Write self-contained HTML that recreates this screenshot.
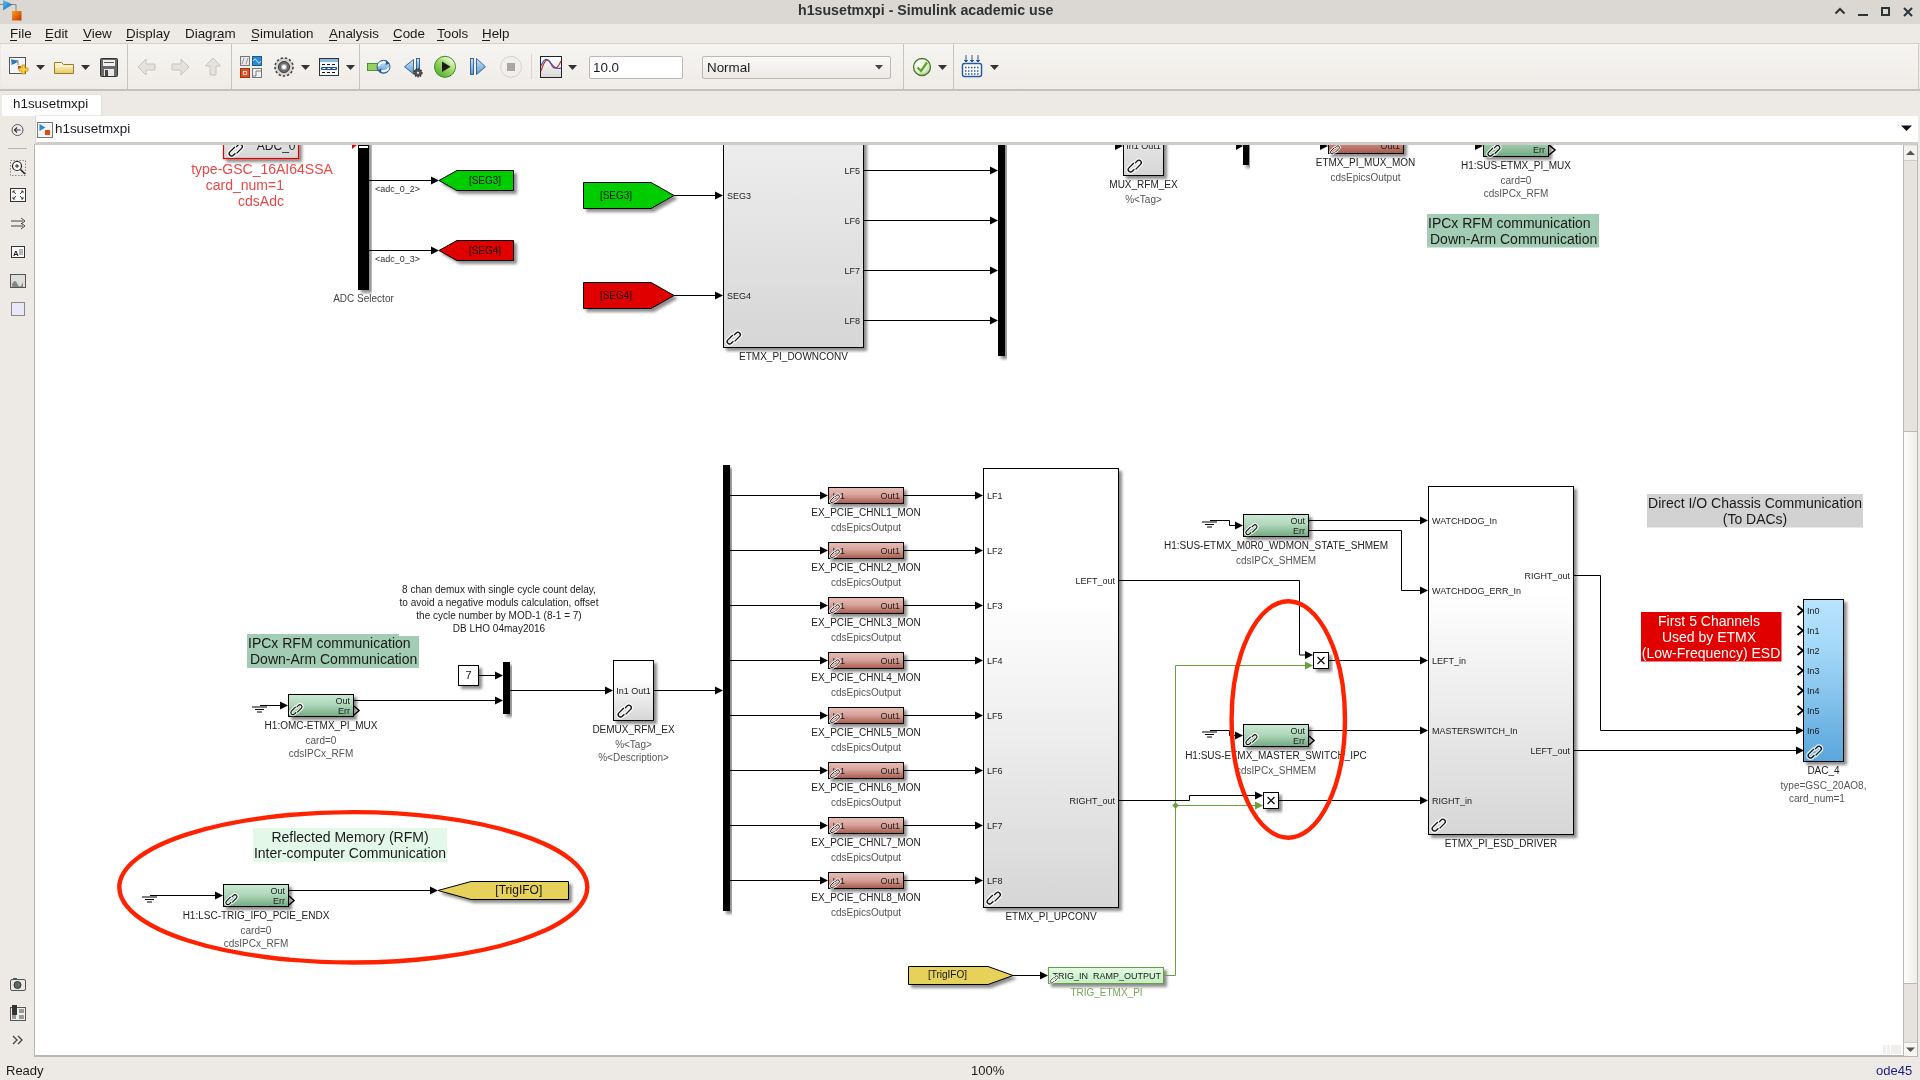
<!DOCTYPE html>
<html><head><meta charset="utf-8"><title>h1susetmxpi - Simulink</title>
<style>html,body{margin:0;padding:0;width:1920px;height:1080px;overflow:hidden;background:#edeae6;font-family:"Liberation Sans",sans-serif;}
svg,div{will-change:transform;}
</style></head><body>
<svg style="position:absolute;left:35px;top:145px" width="1868" height="910" viewBox="35 145 1868 910" font-family="Liberation Sans, sans-serif"><defs>
<filter id="sh" x="-20%" y="-20%" width="150%" height="160%">
<feGaussianBlur in="SourceAlpha" stdDeviation="1.7"/>
<feOffset dx="2.5" dy="2.5" result="ob"/>
<feComponentTransfer><feFuncA type="linear" slope="0.45"/></feComponentTransfer>
<feMerge><feMergeNode/><feMergeNode in="SourceGraphic"/></feMerge>
</filter>
<linearGradient id="gGray" x1="0" y1="0" x2="0" y2="1"><stop offset="0" stop-color="#ffffff"/><stop offset="0.3" stop-color="#ffffff"/><stop offset="1" stop-color="#d6d6d6"/></linearGradient>
<linearGradient id="gGray2" x1="0" y1="0" x2="0" y2="1"><stop offset="0" stop-color="#f2f2f2"/><stop offset="1" stop-color="#d6d6d6"/></linearGradient>
<linearGradient id="gIPC" x1="0" y1="0" x2="0" y2="1"><stop offset="0" stop-color="#cbe8d4"/><stop offset="0.45" stop-color="#b0d8bc"/><stop offset="1" stop-color="#72aa82"/></linearGradient>
<linearGradient id="gEP" x1="0" y1="0" x2="0" y2="1"><stop offset="0" stop-color="#e6beb6"/><stop offset="0.45" stop-color="#d8a49c"/><stop offset="1" stop-color="#a85a4c"/></linearGradient>
<linearGradient id="gDAC" x1="0" y1="0" x2="0" y2="1"><stop offset="0" stop-color="#b8e4ff"/><stop offset="0.3" stop-color="#a4d8f8"/><stop offset="1" stop-color="#5aa6dc"/></linearGradient>
<linearGradient id="gTRIG" x1="0" y1="0" x2="0" y2="1"><stop offset="0" stop-color="#e4fce4"/><stop offset="1" stop-color="#c4ecc4"/></linearGradient>
<g id="lnk">
<g fill="none" stroke="#fff" stroke-width="4" opacity="0.8" stroke-linecap="round"><path d="M7.85 -10.05 L2.90 -5.10 A2.4 2.4 0 0 0 6.30 -1.70 L8.42 -3.82"/><path d="M9.08 -9.88 L11.20 -12.00 A2.4 2.4 0 0 1 14.60 -8.60 L9.65 -3.65"/></g>
<g fill="none" stroke="#111" stroke-width="1.3" stroke-linecap="butt"><path d="M7.85 -10.05 L2.90 -5.10 A2.4 2.4 0 0 0 6.30 -1.70 L8.42 -3.82"/><path d="M9.08 -9.88 L11.20 -12.00 A2.4 2.4 0 0 1 14.60 -8.60 L9.65 -3.65"/></g>
</g>
</defs>
<rect x="35" y="145" width="1868" height="910" fill="#fff"/>
<rect x="223.5" y="120.5" width="75.0" height="38.0" fill="url(#gGray2)" stroke="#e00000" stroke-width="1.2" filter="url(#sh)"/>
<text x="295.5" y="150.3" font-size="12" fill="#222" text-anchor="end" >ADC_0</text>
<use href="#lnk" transform="translate(227.0,157.0) scale(1.0)"/>
<path d="M352 144 L358 144 L352 149 Z" fill="#e00000"/>
<text x="262.0" y="174.0" font-size="14" fill="#e84848" text-anchor="middle" >type-GSC_16AI64SSA</text>
<text x="284.0" y="190.0" font-size="14" fill="#e84848" text-anchor="end" >card_num=1</text>
<text x="284.0" y="206.0" font-size="14" fill="#e84848" text-anchor="end" >cdsAdc</text>
<rect x="358.5" y="120.5" width="10.0" height="169.0" fill="#000" stroke="#000" stroke-width="1" filter="url(#sh)"/>
<rect x="359" y="146" width="9" height="2" fill="#fff"/>
<text x="363.5" y="301.6" font-size="10" fill="#444" text-anchor="middle" >ADC Selector</text>
<path d="M369.0 180.5 L431.0 180.5" stroke="#000" stroke-width="1" fill="none"/>
<path d="M439.0 180.5 L431.0 176.5 L431.0 184.5 Z" fill="#000"/>
<path d="M369.0 250.5 L431.0 250.5" stroke="#000" stroke-width="1" fill="none"/>
<path d="M439.0 250.5 L431.0 246.5 L431.0 254.5 Z" fill="#000"/>
<text x="375.0" y="192.2" font-size="9" fill="#333" text-anchor="start" >&lt;adc_0_2&gt;</text>
<text x="375.0" y="262.2" font-size="9" fill="#333" text-anchor="start" >&lt;adc_0_3&gt;</text>
<path d="M439.0 180.5 L456.9 170.5 L513.5 170.5 L513.5 190.5 L456.9 190.5 Z" fill="#00cc00" stroke="#000" stroke-width="1" filter="url(#sh)"/>
<text x="485.0" y="183.6" font-size="10" fill="#111" text-anchor="middle" >[SEG3]</text>
<path d="M439.0 250.5 L456.9 240.5 L513.5 240.5 L513.5 260.5 L456.9 260.5 Z" fill="#e00000" stroke="#000" stroke-width="1" filter="url(#sh)"/>
<text x="485.0" y="253.6" font-size="10" fill="#111" text-anchor="middle" >[SEG4]</text>
<path d="M583.5 182.5 L651.0 182.5 L674.0 195.5 L651.0 208.5 L583.5 208.5 Z" fill="#00cc00" stroke="#000" stroke-width="1" filter="url(#sh)"/>
<text x="616.0" y="198.6" font-size="10" fill="#111" text-anchor="middle" >[SEG3]</text>
<path d="M583.5 282.5 L651.0 282.5 L674.0 295.5 L651.0 308.5 L583.5 308.5 Z" fill="#e00000" stroke="#000" stroke-width="1" filter="url(#sh)"/>
<text x="616.0" y="298.6" font-size="10" fill="#111" text-anchor="middle" >[SEG4]</text>
<path d="M674.0 195.5 L715.0 195.5" stroke="#000" stroke-width="1" fill="none"/>
<path d="M723.0 195.5 L715.0 191.5 L715.0 199.5 Z" fill="#000"/>
<path d="M674.0 295.5 L715.0 295.5" stroke="#000" stroke-width="1" fill="none"/>
<path d="M723.0 295.5 L715.0 291.5 L715.0 299.5 Z" fill="#000"/>
<rect x="723.5" y="100.5" width="140.0" height="247.0" fill="url(#gGray2)" stroke="#000" stroke-width="1" filter="url(#sh)"/>
<text x="727.0" y="198.7" font-size="9" fill="#222" text-anchor="start" >SEG3</text>
<text x="727.0" y="298.7" font-size="9" fill="#222" text-anchor="start" >SEG4</text>
<text x="860.0" y="173.7" font-size="9" fill="#222" text-anchor="end" >LF5</text>
<path d="M864.0 170.5 L990.0 170.5" stroke="#000" stroke-width="1" fill="none"/>
<path d="M998.0 170.5 L990.0 166.5 L990.0 174.5 Z" fill="#000"/>
<text x="860.0" y="223.7" font-size="9" fill="#222" text-anchor="end" >LF6</text>
<path d="M864.0 220.5 L990.0 220.5" stroke="#000" stroke-width="1" fill="none"/>
<path d="M998.0 220.5 L990.0 216.5 L990.0 224.5 Z" fill="#000"/>
<text x="860.0" y="273.7" font-size="9" fill="#222" text-anchor="end" >LF7</text>
<path d="M864.0 270.5 L990.0 270.5" stroke="#000" stroke-width="1" fill="none"/>
<path d="M998.0 270.5 L990.0 266.5 L990.0 274.5 Z" fill="#000"/>
<text x="860.0" y="323.7" font-size="9" fill="#222" text-anchor="end" >LF8</text>
<path d="M864.0 320.5 L990.0 320.5" stroke="#000" stroke-width="1" fill="none"/>
<path d="M998.0 320.5 L990.0 316.5 L990.0 324.5 Z" fill="#000"/>
<use href="#lnk" transform="translate(725.0,345.0) scale(1.0)"/>
<text x="793.5" y="359.6" font-size="10" fill="#222" text-anchor="middle" >ETMX_PI_DOWNCONV</text>
<rect x="998.5" y="120.5" width="6.0" height="235.0" fill="#000" stroke="#000" stroke-width="1" filter="url(#sh)"/>
<rect x="1123.5" y="110.5" width="40.0" height="65.0" fill="url(#gGray2)" stroke="#000" stroke-width="1" filter="url(#sh)"/>
<text x="1143.5" y="149.2" font-size="9" fill="#222" text-anchor="middle" >In1 Out1</text>
<path d="M1115 142 L1123 146 L1115 150 Z" fill="#000"/>
<use href="#lnk" transform="translate(1126.0,173.0) scale(1.0)"/>
<text x="1143.5" y="188.1" font-size="10" fill="#222" text-anchor="middle" >MUX_RFM_EX</text>
<text x="1143.5" y="203.1" font-size="10" fill="#555" text-anchor="middle" >%&lt;Tag&gt;</text>
<rect x="1243.5" y="120.5" width="5.0" height="44.0" fill="#000" stroke="#000" stroke-width="1" filter="url(#sh)"/>
<path d="M1236 142 L1243 146 L1236 150 Z" fill="#000"/>
<rect x="1328.5" y="125.5" width="75.0" height="28.0" fill="url(#gEP)" stroke="#000" stroke-width="1" filter="url(#sh)"/>
<text x="1400.0" y="149.2" font-size="9" fill="#222" text-anchor="end" >Out1</text>
<path d="M1320 142 L1328 146 L1320 150 Z" fill="#000"/>
<use href="#lnk" transform="translate(1329.0,154.5) scale(0.68)"/>
<text x="1365.5" y="165.6" font-size="10" fill="#222" text-anchor="middle" >ETMX_PI_MUX_MON</text>
<text x="1365.5" y="181.1" font-size="10" fill="#555" text-anchor="middle" >cdsEpicsOutput</text>
<rect x="1483.5" y="125.5" width="65.0" height="31.0" fill="url(#gIPC)" stroke="#000" stroke-width="1" filter="url(#sh)"/>
<text x="1545.0" y="153.2" font-size="9" fill="#222" text-anchor="end" >Err</text>
<path d="M1549 145 L1555 150 L1549 155" fill="none" stroke="#000" stroke-width="1.5"/>
<path d="M1475 142 L1483 146 L1475 150 Z" fill="#000"/>
<use href="#lnk" transform="translate(1486.0,157.0) scale(0.9)"/>
<text x="1516.0" y="168.6" font-size="10" fill="#222" text-anchor="middle" >H1:SUS-ETMX_PI_MUX</text>
<text x="1516.0" y="184.1" font-size="10" fill="#555" text-anchor="middle" >card=0</text>
<text x="1516.0" y="197.1" font-size="10" fill="#555" text-anchor="middle" >cdsIPCx_RFM</text>
<rect x="1427" y="214" width="172" height="33.5" fill="#a2ccb4"/>
<text x="1428.0" y="228.0" font-size="14" fill="#1a1a1a" text-anchor="start" >IPCx RFM communication</text>
<text x="1430.0" y="244.0" font-size="14" fill="#1a1a1a" text-anchor="start" >Down-Arm Communication</text>
<path d="M247 634 H399 V636 H419 V668 H247 Z" fill="#a2ccb4"/>
<text x="248.0" y="648.0" font-size="14" fill="#1a1a1a" text-anchor="start" >IPCx RFM communication</text>
<text x="250.0" y="664.0" font-size="14" fill="#1a1a1a" text-anchor="start" >Down-Arm Communication</text>
<path d="M252 707 h15 M255 709.5 h9 M257 712 h5" stroke="#000" stroke-width="1"/>
<path d="M260.0 705.5 L280.0 705.5" stroke="#000" stroke-width="1" fill="none"/>
<path d="M288.0 705.5 L280.0 701.5 L280.0 709.5 Z" fill="#000"/>
<rect x="288.5" y="694.5" width="65.0" height="22.0" fill="url(#gIPC)" stroke="#000" stroke-width="1" filter="url(#sh)"/>
<text x="350.0" y="703.7" font-size="9" fill="#222" text-anchor="end" >Out</text>
<text x="350.0" y="713.7" font-size="9" fill="#222" text-anchor="end" >Err</text>
<path d="M354 706 L359 710.5 L354 715" fill="none" stroke="#000" stroke-width="1.5"/>
<use href="#lnk" transform="translate(289.0,715.5) scale(0.85)"/>
<text x="321.0" y="728.6" font-size="10" fill="#222" text-anchor="middle" >H1:OMC-ETMX_PI_MUX</text>
<text x="321.0" y="743.9" font-size="10" fill="#555" text-anchor="middle" >card=0</text>
<text x="321.0" y="756.9" font-size="10" fill="#555" text-anchor="middle" >cdsIPCx_RFM</text>
<path d="M354.0 700.5 L495.0 700.5" stroke="#000" stroke-width="1" fill="none"/>
<path d="M503.0 700.5 L495.0 696.5 L495.0 704.5 Z" fill="#000"/>
<text x="499.0" y="593.1" font-size="10" fill="#222" text-anchor="middle" >8 chan demux with single cycle count delay,</text>
<text x="499.0" y="606.1" font-size="10" fill="#222" text-anchor="middle" >to avoid a negative moduls calculation, offset</text>
<text x="499.0" y="619.1" font-size="10" fill="#222" text-anchor="middle" >the cycle number by MOD-1 (8-1 = 7)</text>
<text x="499.0" y="632.1" font-size="10" fill="#222" text-anchor="middle" >DB LHO 04may2016</text>
<rect x="458.5" y="665.5" width="20.0" height="20.0" fill="#fff" stroke="#000" stroke-width="1" filter="url(#sh)"/>
<text x="468.5" y="678.5" font-size="11" fill="#111" text-anchor="middle" >7</text>
<path d="M479.0 675.5 L495.0 675.5" stroke="#000" stroke-width="1" fill="none"/>
<path d="M503.0 675.5 L495.0 671.5 L495.0 679.5 Z" fill="#000"/>
<rect x="503.5" y="662.5" width="6.0" height="51.0" fill="#000" stroke="#000" stroke-width="1" filter="url(#sh)"/>
<path d="M510.0 690.5 L605.0 690.5" stroke="#000" stroke-width="1" fill="none"/>
<path d="M613.0 690.5 L605.0 686.5 L605.0 694.5 Z" fill="#000"/>
<rect x="613.5" y="660.5" width="40.0" height="60.0" fill="url(#gGray)" stroke="#000" stroke-width="1" filter="url(#sh)"/>
<text x="633.5" y="694.2" font-size="9" fill="#222" text-anchor="middle" >In1 Out1</text>
<use href="#lnk" transform="translate(616.0,718.0) scale(1.0)"/>
<text x="633.5" y="733.1" font-size="10" fill="#222" text-anchor="middle" >DEMUX_RFM_EX</text>
<text x="633.5" y="747.8" font-size="10" fill="#555" text-anchor="middle" >%&lt;Tag&gt;</text>
<text x="633.5" y="761.1" font-size="10" fill="#555" text-anchor="middle" >%&lt;Description&gt;</text>
<path d="M654.0 690.5 L715.0 690.5" stroke="#000" stroke-width="1" fill="none"/>
<path d="M723.0 690.5 L715.0 686.5 L715.0 694.5 Z" fill="#000"/>
<rect x="723.5" y="465.5" width="6.0" height="445.0" fill="#000" stroke="#000" stroke-width="1" filter="url(#sh)"/>
<path d="M730.0 495.5 L820.0 495.5" stroke="#000" stroke-width="1" fill="none"/>
<path d="M828.0 495.5 L820.0 491.5 L820.0 499.5 Z" fill="#000"/>
<rect x="828.5" y="487.5" width="75.0" height="16.0" fill="url(#gEP)" stroke="#000" stroke-width="1" filter="url(#sh)"/>
<text x="832.5" y="498.7" font-size="9" fill="#222" text-anchor="start" >In1</text>
<text x="900.0" y="498.7" font-size="9" fill="#222" text-anchor="end" >Out1</text>
<use href="#lnk" transform="translate(829.0,503.5) scale(0.68)"/>
<path d="M904.0 495.5 L975.0 495.5" stroke="#000" stroke-width="1" fill="none"/>
<path d="M983.0 495.5 L975.0 491.5 L975.0 499.5 Z" fill="#000"/>
<text x="866.0" y="516.1" font-size="10" fill="#222" text-anchor="middle" >EX_PCIE_CHNL1_MON</text>
<text x="866.0" y="531.1" font-size="10" fill="#555" text-anchor="middle" >cdsEpicsOutput</text>
<path d="M730.0 550.5 L820.0 550.5" stroke="#000" stroke-width="1" fill="none"/>
<path d="M828.0 550.5 L820.0 546.5 L820.0 554.5 Z" fill="#000"/>
<rect x="828.5" y="542.5" width="75.0" height="16.0" fill="url(#gEP)" stroke="#000" stroke-width="1" filter="url(#sh)"/>
<text x="832.5" y="553.7" font-size="9" fill="#222" text-anchor="start" >In1</text>
<text x="900.0" y="553.7" font-size="9" fill="#222" text-anchor="end" >Out1</text>
<use href="#lnk" transform="translate(829.0,558.5) scale(0.68)"/>
<path d="M904.0 550.5 L975.0 550.5" stroke="#000" stroke-width="1" fill="none"/>
<path d="M983.0 550.5 L975.0 546.5 L975.0 554.5 Z" fill="#000"/>
<text x="866.0" y="571.1" font-size="10" fill="#222" text-anchor="middle" >EX_PCIE_CHNL2_MON</text>
<text x="866.0" y="586.1" font-size="10" fill="#555" text-anchor="middle" >cdsEpicsOutput</text>
<path d="M730.0 605.5 L820.0 605.5" stroke="#000" stroke-width="1" fill="none"/>
<path d="M828.0 605.5 L820.0 601.5 L820.0 609.5 Z" fill="#000"/>
<rect x="828.5" y="597.5" width="75.0" height="16.0" fill="url(#gEP)" stroke="#000" stroke-width="1" filter="url(#sh)"/>
<text x="832.5" y="608.7" font-size="9" fill="#222" text-anchor="start" >In1</text>
<text x="900.0" y="608.7" font-size="9" fill="#222" text-anchor="end" >Out1</text>
<use href="#lnk" transform="translate(829.0,613.5) scale(0.68)"/>
<path d="M904.0 605.5 L975.0 605.5" stroke="#000" stroke-width="1" fill="none"/>
<path d="M983.0 605.5 L975.0 601.5 L975.0 609.5 Z" fill="#000"/>
<text x="866.0" y="626.1" font-size="10" fill="#222" text-anchor="middle" >EX_PCIE_CHNL3_MON</text>
<text x="866.0" y="641.1" font-size="10" fill="#555" text-anchor="middle" >cdsEpicsOutput</text>
<path d="M730.0 660.5 L820.0 660.5" stroke="#000" stroke-width="1" fill="none"/>
<path d="M828.0 660.5 L820.0 656.5 L820.0 664.5 Z" fill="#000"/>
<rect x="828.5" y="652.5" width="75.0" height="16.0" fill="url(#gEP)" stroke="#000" stroke-width="1" filter="url(#sh)"/>
<text x="832.5" y="663.7" font-size="9" fill="#222" text-anchor="start" >In1</text>
<text x="900.0" y="663.7" font-size="9" fill="#222" text-anchor="end" >Out1</text>
<use href="#lnk" transform="translate(829.0,668.5) scale(0.68)"/>
<path d="M904.0 660.5 L975.0 660.5" stroke="#000" stroke-width="1" fill="none"/>
<path d="M983.0 660.5 L975.0 656.5 L975.0 664.5 Z" fill="#000"/>
<text x="866.0" y="681.1" font-size="10" fill="#222" text-anchor="middle" >EX_PCIE_CHNL4_MON</text>
<text x="866.0" y="696.1" font-size="10" fill="#555" text-anchor="middle" >cdsEpicsOutput</text>
<path d="M730.0 715.5 L820.0 715.5" stroke="#000" stroke-width="1" fill="none"/>
<path d="M828.0 715.5 L820.0 711.5 L820.0 719.5 Z" fill="#000"/>
<rect x="828.5" y="707.5" width="75.0" height="16.0" fill="url(#gEP)" stroke="#000" stroke-width="1" filter="url(#sh)"/>
<text x="832.5" y="718.7" font-size="9" fill="#222" text-anchor="start" >In1</text>
<text x="900.0" y="718.7" font-size="9" fill="#222" text-anchor="end" >Out1</text>
<use href="#lnk" transform="translate(829.0,723.5) scale(0.68)"/>
<path d="M904.0 715.5 L975.0 715.5" stroke="#000" stroke-width="1" fill="none"/>
<path d="M983.0 715.5 L975.0 711.5 L975.0 719.5 Z" fill="#000"/>
<text x="866.0" y="736.1" font-size="10" fill="#222" text-anchor="middle" >EX_PCIE_CHNL5_MON</text>
<text x="866.0" y="751.1" font-size="10" fill="#555" text-anchor="middle" >cdsEpicsOutput</text>
<path d="M730.0 770.5 L820.0 770.5" stroke="#000" stroke-width="1" fill="none"/>
<path d="M828.0 770.5 L820.0 766.5 L820.0 774.5 Z" fill="#000"/>
<rect x="828.5" y="762.5" width="75.0" height="16.0" fill="url(#gEP)" stroke="#000" stroke-width="1" filter="url(#sh)"/>
<text x="832.5" y="773.7" font-size="9" fill="#222" text-anchor="start" >In1</text>
<text x="900.0" y="773.7" font-size="9" fill="#222" text-anchor="end" >Out1</text>
<use href="#lnk" transform="translate(829.0,778.5) scale(0.68)"/>
<path d="M904.0 770.5 L975.0 770.5" stroke="#000" stroke-width="1" fill="none"/>
<path d="M983.0 770.5 L975.0 766.5 L975.0 774.5 Z" fill="#000"/>
<text x="866.0" y="791.1" font-size="10" fill="#222" text-anchor="middle" >EX_PCIE_CHNL6_MON</text>
<text x="866.0" y="806.1" font-size="10" fill="#555" text-anchor="middle" >cdsEpicsOutput</text>
<path d="M730.0 825.5 L820.0 825.5" stroke="#000" stroke-width="1" fill="none"/>
<path d="M828.0 825.5 L820.0 821.5 L820.0 829.5 Z" fill="#000"/>
<rect x="828.5" y="817.5" width="75.0" height="16.0" fill="url(#gEP)" stroke="#000" stroke-width="1" filter="url(#sh)"/>
<text x="832.5" y="828.7" font-size="9" fill="#222" text-anchor="start" >In1</text>
<text x="900.0" y="828.7" font-size="9" fill="#222" text-anchor="end" >Out1</text>
<use href="#lnk" transform="translate(829.0,833.5) scale(0.68)"/>
<path d="M904.0 825.5 L975.0 825.5" stroke="#000" stroke-width="1" fill="none"/>
<path d="M983.0 825.5 L975.0 821.5 L975.0 829.5 Z" fill="#000"/>
<text x="866.0" y="846.1" font-size="10" fill="#222" text-anchor="middle" >EX_PCIE_CHNL7_MON</text>
<text x="866.0" y="861.1" font-size="10" fill="#555" text-anchor="middle" >cdsEpicsOutput</text>
<path d="M730.0 880.5 L820.0 880.5" stroke="#000" stroke-width="1" fill="none"/>
<path d="M828.0 880.5 L820.0 876.5 L820.0 884.5 Z" fill="#000"/>
<rect x="828.5" y="872.5" width="75.0" height="16.0" fill="url(#gEP)" stroke="#000" stroke-width="1" filter="url(#sh)"/>
<text x="832.5" y="883.7" font-size="9" fill="#222" text-anchor="start" >In1</text>
<text x="900.0" y="883.7" font-size="9" fill="#222" text-anchor="end" >Out1</text>
<use href="#lnk" transform="translate(829.0,888.5) scale(0.68)"/>
<path d="M904.0 880.5 L975.0 880.5" stroke="#000" stroke-width="1" fill="none"/>
<path d="M983.0 880.5 L975.0 876.5 L975.0 884.5 Z" fill="#000"/>
<text x="866.0" y="901.1" font-size="10" fill="#222" text-anchor="middle" >EX_PCIE_CHNL8_MON</text>
<text x="866.0" y="916.1" font-size="10" fill="#555" text-anchor="middle" >cdsEpicsOutput</text>
<rect x="983.5" y="468.5" width="135.0" height="439.0" fill="url(#gGray)" stroke="#000" stroke-width="1" filter="url(#sh)"/>
<text x="987.0" y="498.7" font-size="9" fill="#222" text-anchor="start" >LF1</text>
<text x="987.0" y="553.7" font-size="9" fill="#222" text-anchor="start" >LF2</text>
<text x="987.0" y="608.7" font-size="9" fill="#222" text-anchor="start" >LF3</text>
<text x="987.0" y="663.7" font-size="9" fill="#222" text-anchor="start" >LF4</text>
<text x="987.0" y="718.7" font-size="9" fill="#222" text-anchor="start" >LF5</text>
<text x="987.0" y="773.7" font-size="9" fill="#222" text-anchor="start" >LF6</text>
<text x="987.0" y="828.7" font-size="9" fill="#222" text-anchor="start" >LF7</text>
<text x="987.0" y="883.7" font-size="9" fill="#222" text-anchor="start" >LF8</text>
<text x="1115.0" y="583.7" font-size="9" fill="#222" text-anchor="end" >LEFT_out</text>
<text x="1115.0" y="803.7" font-size="9" fill="#222" text-anchor="end" >RIGHT_out</text>
<use href="#lnk" transform="translate(985.0,905.0) scale(1.0)"/>
<text x="1051.0" y="919.6" font-size="10" fill="#222" text-anchor="middle" >ETMX_PI_UPCONV</text>
<rect x="253" y="828" width="194" height="34" fill="#e4f8ea"/>
<text x="350.0" y="842.0" font-size="14" fill="#1a1a1a" text-anchor="middle" >Reflected Memory (RFM)</text>
<text x="350.0" y="858.0" font-size="14" fill="#1a1a1a" text-anchor="middle" >Inter-computer Communication</text>
<path d="M142 897 h15 M145 899.5 h9 M147 902 h5" stroke="#000" stroke-width="1"/>
<path d="M150.0 895.5 L215.0 895.5" stroke="#000" stroke-width="1" fill="none"/>
<path d="M223.0 895.5 L215.0 891.5 L215.0 899.5 Z" fill="#000"/>
<rect x="223.5" y="884.5" width="65.0" height="22.0" fill="url(#gIPC)" stroke="#000" stroke-width="1" filter="url(#sh)"/>
<text x="285.0" y="893.7" font-size="9" fill="#222" text-anchor="end" >Out</text>
<text x="285.0" y="903.7" font-size="9" fill="#222" text-anchor="end" >Err</text>
<path d="M289 896 L294 900.5 L289 905" fill="none" stroke="#000" stroke-width="1.5"/>
<use href="#lnk" transform="translate(224.0,905.5) scale(0.85)"/>
<text x="256.0" y="918.6" font-size="10" fill="#222" text-anchor="middle" >H1:LSC-TRIG_IFO_PCIE_ENDX</text>
<text x="256.0" y="933.8" font-size="10" fill="#555" text-anchor="middle" >card=0</text>
<text x="256.0" y="946.8" font-size="10" fill="#555" text-anchor="middle" >cdsIPCx_RFM</text>
<path d="M289.0 890.5 L430.0 890.5" stroke="#000" stroke-width="1" fill="none"/>
<path d="M438.0 890.5 L430.0 886.5 L430.0 894.5 Z" fill="#000"/>
<path d="M438.0 890.5 L471.0 881.5 L568.5 881.5 L568.5 899.5 L471.0 899.5 Z" fill="#e6d15a" stroke="#000" stroke-width="1" filter="url(#sh)"/>
<text x="518.8" y="893.8" font-size="12" fill="#111" text-anchor="middle" >[TrigIFO]</text>
<ellipse cx="353.3" cy="887.3" rx="234" ry="75.2" fill="none" stroke="#ff2200" stroke-width="4.4"/>
<path d="M908.5 966.5 L988.0 966.5 L1013.0 975.5 L988.0 984.5 L908.5 984.5 Z" fill="#e6d15a" stroke="#000" stroke-width="1" filter="url(#sh)"/>
<text x="947.5" y="978.2" font-size="10" fill="#111" text-anchor="middle" >[TrigIFO]</text>
<path d="M1013.0 975.5 L1040.0 975.5" stroke="#000" stroke-width="1" fill="none"/>
<path d="M1048.0 975.5 L1040.0 971.5 L1040.0 979.5 Z" fill="#000"/>
<rect x="1048.5" y="967.5" width="115.0" height="16.0" fill="url(#gTRIG)" stroke="#68a040" stroke-width="1" filter="url(#sh)"/>
<text x="1052.5" y="979.2" font-size="9" fill="#1a1a1a" text-anchor="start" >TRIG_IN</text>
<text x="1161.0" y="979.2" font-size="9" fill="#1a1a1a" text-anchor="end" >RAMP_OUTPUT</text>
<use href="#lnk" transform="translate(1049.0,983.5) scale(0.6)"/>
<text x="1106.5" y="995.6" font-size="10" fill="#78a85a" text-anchor="middle" >TRIG_ETMX_PI</text>
<path d="M1164.0 975.5 L1175.5 975.5 L1175.5 665.5 L1305.0 665.5" stroke="#68a040" stroke-width="1" fill="none"/>
<path d="M1313.0 665.5 L1305.0 661.5 L1305.0 669.5 Z" fill="#68a040"/>
<path d="M1175.5 805.5 L1255.0 805.5" stroke="#68a040" stroke-width="1" fill="none"/>
<path d="M1263.0 805.5 L1255.0 801.5 L1255.0 809.5 Z" fill="#68a040"/>
<path d="M1175.5 802.3 L1178.7 805.5 L1175.5 808.7 L1172.3 805.5 Z" fill="#68a040"/>
<path d="M1119.0 580.5 L1299.5 580.5 L1299.5 655.0 L1305.0 655.0" stroke="#000" stroke-width="1" fill="none"/>
<path d="M1313.0 655.0 L1305.0 651.0 L1305.0 659.0 Z" fill="#000"/>
<path d="M1119.0 800.5 L1189.5 800.5 L1189.5 795.5 L1255.0 795.5" stroke="#000" stroke-width="1" fill="none"/>
<path d="M1263.0 795.5 L1255.0 791.5 L1255.0 799.5 Z" fill="#000"/>
<rect x="1313.5" y="652.5" width="15.0" height="16.0" fill="#fff" stroke="#000" stroke-width="1" filter="url(#sh)"/>
<path d="M1317.5 657 L1324.5 664 M1324.5 657 L1317.5 664" stroke="#111" stroke-width="1.25"/>
<rect x="1263.5" y="792.5" width="15.0" height="16.0" fill="#fff" stroke="#000" stroke-width="1" filter="url(#sh)"/>
<path d="M1267.5 797 L1274.5 804 M1274.5 797 L1267.5 804" stroke="#111" stroke-width="1.25"/>
<path d="M1329.0 660.5 L1420.0 660.5" stroke="#000" stroke-width="1" fill="none"/>
<path d="M1428.0 660.5 L1420.0 656.5 L1420.0 664.5 Z" fill="#000"/>
<path d="M1279.0 800.5 L1420.0 800.5" stroke="#000" stroke-width="1" fill="none"/>
<path d="M1428.0 800.5 L1420.0 796.5 L1420.0 804.5 Z" fill="#000"/>
<path d="M1202 522 h15 M1205 524.5 h9 M1207 527 h5" stroke="#000" stroke-width="1"/>
<path d="M1210.0 520.5 L1229.5 520.5 L1229.5 525.5 L1235.0 525.5" stroke="#000" stroke-width="1" fill="none"/>
<path d="M1243.0 525.5 L1235.0 521.5 L1235.0 529.5 Z" fill="#000"/>
<rect x="1243.5" y="514.5" width="65.0" height="22.0" fill="url(#gIPC)" stroke="#000" stroke-width="1" filter="url(#sh)"/>
<text x="1305.0" y="523.7" font-size="9" fill="#222" text-anchor="end" >Out</text>
<text x="1305.0" y="533.7" font-size="9" fill="#222" text-anchor="end" >Err</text>
<use href="#lnk" transform="translate(1244.0,535.5) scale(0.85)"/>
<text x="1276.0" y="548.6" font-size="10" fill="#222" text-anchor="middle" >H1:SUS-ETMX_M0R0_WDMON_STATE_SHMEM</text>
<text x="1276.0" y="563.6" font-size="10" fill="#555" text-anchor="middle" >cdsIPCx_SHMEM</text>
<path d="M1309.0 520.5 L1420.0 520.5" stroke="#000" stroke-width="1" fill="none"/>
<path d="M1428.0 520.5 L1420.0 516.5 L1420.0 524.5 Z" fill="#000"/>
<path d="M1309.0 530.5 L1401.5 530.5 L1401.5 590.5 L1420.0 590.5" stroke="#000" stroke-width="1" fill="none"/>
<path d="M1428.0 590.5 L1420.0 586.5 L1420.0 594.5 Z" fill="#000"/>
<path d="M1202 732 h15 M1205 734.5 h9 M1207 737 h5" stroke="#000" stroke-width="1"/>
<path d="M1210.0 730.5 L1229.5 730.5 L1229.5 735.5 L1235.0 735.5" stroke="#000" stroke-width="1" fill="none"/>
<path d="M1243.0 735.5 L1235.0 731.5 L1235.0 739.5 Z" fill="#000"/>
<rect x="1243.5" y="724.5" width="65.0" height="22.0" fill="url(#gIPC)" stroke="#000" stroke-width="1" filter="url(#sh)"/>
<text x="1305.0" y="733.7" font-size="9" fill="#222" text-anchor="end" >Out</text>
<text x="1305.0" y="743.7" font-size="9" fill="#222" text-anchor="end" >Err</text>
<path d="M1309 736 L1314 740.5 L1309 745" fill="none" stroke="#000" stroke-width="1.5"/>
<use href="#lnk" transform="translate(1244.0,745.5) scale(0.85)"/>
<text x="1276.0" y="758.6" font-size="10" fill="#222" text-anchor="middle" >H1:SUS-ETMX_MASTER_SWITCH_IPC</text>
<text x="1276.0" y="773.6" font-size="10" fill="#555" text-anchor="middle" >cdsIPCx_SHMEM</text>
<path d="M1309.0 730.5 L1420.0 730.5" stroke="#000" stroke-width="1" fill="none"/>
<path d="M1428.0 730.5 L1420.0 726.5 L1420.0 734.5 Z" fill="#000"/>
<ellipse cx="1288.3" cy="719.5" rx="56.7" ry="118.2" fill="none" stroke="#ff2200" stroke-width="4.4"/>
<rect x="1428.5" y="486.5" width="145.0" height="348.0" fill="url(#gGray)" stroke="#000" stroke-width="1" filter="url(#sh)"/>
<text x="1432.0" y="523.7" font-size="9" fill="#222" text-anchor="start" >WATCHDOG_In</text>
<text x="1432.0" y="593.7" font-size="9" fill="#222" text-anchor="start" >WATCHDOG_ERR_In</text>
<text x="1432.0" y="663.7" font-size="9" fill="#222" text-anchor="start" >LEFT_in</text>
<text x="1432.0" y="733.7" font-size="9" fill="#222" text-anchor="start" >MASTERSWITCH_In</text>
<text x="1432.0" y="803.7" font-size="9" fill="#222" text-anchor="start" >RIGHT_in</text>
<text x="1570.0" y="578.7" font-size="9" fill="#222" text-anchor="end" >RIGHT_out</text>
<text x="1570.0" y="753.7" font-size="9" fill="#222" text-anchor="end" >LEFT_out</text>
<use href="#lnk" transform="translate(1430.0,832.0) scale(1.0)"/>
<text x="1501.0" y="846.6" font-size="10" fill="#222" text-anchor="middle" >ETMX_PI_ESD_DRIVER</text>
<path d="M1574.0 575.5 L1600.5 575.5 L1600.5 730.5 L1796.0 730.5" stroke="#000" stroke-width="1" fill="none"/>
<path d="M1804.0 730.5 L1796.0 726.5 L1796.0 734.5 Z" fill="#000"/>
<path d="M1574.0 750.5 L1796.0 750.5" stroke="#000" stroke-width="1" fill="none"/>
<path d="M1804.0 750.5 L1796.0 746.5 L1796.0 754.5 Z" fill="#000"/>
<rect x="1647" y="494" width="216" height="33.5" fill="#d2d2d2"/>
<text x="1755.0" y="508.0" font-size="14" fill="#1a1a1a" text-anchor="middle" >Direct I/O Chassis Communication</text>
<text x="1755.0" y="524.0" font-size="14" fill="#1a1a1a" text-anchor="middle" >(To DACs)</text>
<rect x="1641" y="612" width="140.5" height="49.5" fill="#e00000"/>
<text x="1709.0" y="626.0" font-size="14" fill="#fff" text-anchor="middle" >First 5 Channels</text>
<text x="1709.0" y="642.0" font-size="14" fill="#fff" text-anchor="middle" >Used by ETMX</text>
<text x="1711.0" y="658.0" font-size="14" fill="#fff" text-anchor="middle" >(Low-Frequency) ESD</text>
<rect x="1803.5" y="599.5" width="40.0" height="162.0" fill="url(#gDAC)" stroke="#000" stroke-width="1" filter="url(#sh)"/>
<path d="M1797.5 606.0 L1803 610.5 L1797.5 615.0" fill="none" stroke="#000" stroke-width="1.8"/>
<text x="1807.0" y="613.7" font-size="9" fill="#1a1a1a" text-anchor="start" >In0</text>
<path d="M1797.5 626.0 L1803 630.5 L1797.5 635.0" fill="none" stroke="#000" stroke-width="1.8"/>
<text x="1807.0" y="633.7" font-size="9" fill="#1a1a1a" text-anchor="start" >In1</text>
<path d="M1797.5 646.0 L1803 650.5 L1797.5 655.0" fill="none" stroke="#000" stroke-width="1.8"/>
<text x="1807.0" y="653.7" font-size="9" fill="#1a1a1a" text-anchor="start" >In2</text>
<path d="M1797.5 666.0 L1803 670.5 L1797.5 675.0" fill="none" stroke="#000" stroke-width="1.8"/>
<text x="1807.0" y="673.7" font-size="9" fill="#1a1a1a" text-anchor="start" >In3</text>
<path d="M1797.5 686.0 L1803 690.5 L1797.5 695.0" fill="none" stroke="#000" stroke-width="1.8"/>
<text x="1807.0" y="693.7" font-size="9" fill="#1a1a1a" text-anchor="start" >In4</text>
<path d="M1797.5 706.0 L1803 710.5 L1797.5 715.0" fill="none" stroke="#000" stroke-width="1.8"/>
<text x="1807.0" y="713.7" font-size="9" fill="#1a1a1a" text-anchor="start" >In5</text>
<text x="1807.0" y="733.7" font-size="9" fill="#1a1a1a" text-anchor="start" >In6</text>
<use href="#lnk" transform="translate(1806.0,759.0) scale(1.0)"/>
<text x="1823.5" y="773.9" font-size="10" fill="#222" text-anchor="middle" >DAC_4</text>
<text x="1823.5" y="789.2" font-size="10" fill="#555" text-anchor="middle" >type=GSC_20AO8,</text>
<text x="1817.0" y="801.8" font-size="10" fill="#555" text-anchor="middle" >card_num=1</text>
</svg>
<div style="position:absolute;left:0;top:0;width:1920px;height:24px;background:#dbd7d3;"></div>
<svg style="position:absolute;left:0;top:0" width="24" height="24" viewBox="0 0 24 24">
<defs><linearGradient id="icb" x1="0" y1="0" x2="1" y2="1"><stop offset="0" stop-color="#5ec0f0"/><stop offset="1" stop-color="#1060b0"/></linearGradient>
<linearGradient id="ico" x1="0" y1="0" x2="1" y2="1"><stop offset="0" stop-color="#f8a020"/><stop offset="1" stop-color="#c83000"/></linearGradient></defs>
<path d="M0 4.5 H16 V11" stroke="#888" stroke-width="1" fill="none"/>
<path d="M3 0 L12.5 4.5 L3 10.5 Z" fill="url(#icb)"/>
<rect x="12" y="11" width="9.5" height="9.5" fill="url(#ico)"/></svg>
<div style="position:absolute;left:798px;top:2px;font:bold 14.2px 'Liberation Sans', sans-serif;color:#2e3436;white-space:nowrap">h1susetmxpi - Simulink academic use</div>
<svg style="position:absolute;left:1830px;top:2px" width="90" height="20">
<path d="M5.5 11.5 L10 7 L14.5 11.5" stroke="#2e3436" stroke-width="2" fill="none"/>
<path d="M28 13 H38" stroke="#2e3436" stroke-width="2"/>
<rect x="52" y="6" width="7" height="7" stroke="#2e3436" stroke-width="2" fill="none"/>
<path d="M74 6 L82 14 M82 6 L74 14" stroke="#2e3436" stroke-width="2"/></svg>
<div style="position:absolute;left:0;top:24px;width:1920px;height:20px;background:#edeae6;"></div>
<div style="position:absolute;left:10px;top:26px;font:13.4px 'Liberation Sans', sans-serif;color:#1a1a1a;white-space:nowrap">File</div>
<div style="position:absolute;left:45px;top:26px;font:13.4px 'Liberation Sans', sans-serif;color:#1a1a1a;white-space:nowrap">Edit</div>
<div style="position:absolute;left:83px;top:26px;font:13.4px 'Liberation Sans', sans-serif;color:#1a1a1a;white-space:nowrap">View</div>
<div style="position:absolute;left:126px;top:26px;font:13.4px 'Liberation Sans', sans-serif;color:#1a1a1a;white-space:nowrap">Display</div>
<div style="position:absolute;left:185px;top:26px;font:13.4px 'Liberation Sans', sans-serif;color:#1a1a1a;white-space:nowrap">Diagram</div>
<div style="position:absolute;left:251px;top:26px;font:13.4px 'Liberation Sans', sans-serif;color:#1a1a1a;white-space:nowrap">Simulation</div>
<div style="position:absolute;left:329px;top:26px;font:13.4px 'Liberation Sans', sans-serif;color:#1a1a1a;white-space:nowrap">Analysis</div>
<div style="position:absolute;left:393px;top:26px;font:13.4px 'Liberation Sans', sans-serif;color:#1a1a1a;white-space:nowrap">Code</div>
<div style="position:absolute;left:437px;top:26px;font:13.4px 'Liberation Sans', sans-serif;color:#1a1a1a;white-space:nowrap">Tools</div>
<div style="position:absolute;left:482px;top:26px;font:13.4px 'Liberation Sans', sans-serif;color:#1a1a1a;white-space:nowrap">Help</div>
<div style="position:absolute;left:10px;top:40px;width:7px;height:1px;background:#1a1a1a"></div>
<div style="position:absolute;left:45px;top:40px;width:7px;height:1px;background:#1a1a1a"></div>
<div style="position:absolute;left:83px;top:40px;width:8px;height:1px;background:#1a1a1a"></div>
<div style="position:absolute;left:126px;top:40px;width:7px;height:1px;background:#1a1a1a"></div>
<div style="position:absolute;left:215px;top:40px;width:8px;height:1px;background:#1a1a1a"></div>
<div style="position:absolute;left:251px;top:40px;width:7px;height:1px;background:#1a1a1a"></div>
<div style="position:absolute;left:329px;top:40px;width:8px;height:1px;background:#1a1a1a"></div>
<div style="position:absolute;left:393px;top:40px;width:8px;height:1px;background:#1a1a1a"></div>
<div style="position:absolute;left:437px;top:40px;width:7px;height:1px;background:#1a1a1a"></div>
<div style="position:absolute;left:482px;top:40px;width:8px;height:1px;background:#1a1a1a"></div>
<div style="position:absolute;left:0;top:43px;width:1920px;height:1px;background:#d4d0cb"></div>
<div style="position:absolute;left:1px;top:44px;width:1917px;height:45px;background:linear-gradient(#f6f4f1,#efece8);border-right:1px solid #d0ccc8"></div>
<div style="position:absolute;left:0;top:89px;width:1920px;height:2px;background:#c4c0bc"></div>
<div style="position:absolute;left:127px;top:44px;width:1px;height:45px;background:#c8c4c0"></div>
<div style="position:absolute;left:231px;top:44px;width:1px;height:45px;background:#c8c4c0"></div>
<div style="position:absolute;left:359px;top:44px;width:1px;height:45px;background:#c8c4c0"></div>
<div style="position:absolute;left:903px;top:44px;width:1px;height:45px;background:#c8c4c0"></div>
<div style="position:absolute;left:953px;top:44px;width:1px;height:45px;background:#c8c4c0"></div>
<div style="position:absolute;left:531px;top:54px;width:1px;height:25px;background:#d8d4d0"></div>
<svg style="position:absolute;left:0;top:44px" width="1010" height="46">
<defs>
<linearGradient id="tgf" x1="0" y1="0" x2="0" y2="1"><stop offset="0" stop-color="#fffbe0"/><stop offset="1" stop-color="#e8c860"/></linearGradient>
<linearGradient id="tgp" x1="0.8" y1="0.1" x2="0.2" y2="0.9"><stop offset="0" stop-color="#f4fce8"/><stop offset="0.4" stop-color="#a8dc70"/><stop offset="1" stop-color="#58b030"/></linearGradient>
<linearGradient id="tgb" x1="0" y1="0" x2="0" y2="1"><stop offset="0" stop-color="#d0e8f8"/><stop offset="1" stop-color="#5a9ad0"/></linearGradient>
<radialGradient id="tgc" cx="0.35" cy="0.3" r="0.8"><stop offset="0" stop-color="#ffffff"/><stop offset="0.6" stop-color="#e4f0d0"/><stop offset="1" stop-color="#a8c890"/></radialGradient>
</defs>
<!-- new model -->
<g transform="translate(0,-4)">
<rect x="9.5" y="17.5" width="16" height="16" fill="#f4f4f4" stroke="#555"/>
<path d="M11.5 19 L18 22 L11.5 25 Z" fill="#1a7ad0"/>
<path d="M11 20.5 h7 v4.5" stroke="#666" stroke-width="0.8" fill="none"/>
<rect x="18" y="26" width="3" height="3" fill="#d04020"/>
<path d="M22 25 h3 v3 h3 v3 h-3 v3 h-3 v-3 h-3 v-3 h3 Z" fill="#f8d040" stroke="#c09010" stroke-width="0.8"/>
<path d="M36 25 h9 l-4.5 5 Z" fill="#333"/>
<!-- open -->
<path d="M54.5 22.5 h7 l2 2 h10 v9 h-19 Z" fill="url(#tgf)" stroke="#9a7a30"/>
<path d="M56 26.5 h17" stroke="#fff8d0" stroke-width="1"/>
<path d="M81 25 h9 l-4.5 5 Z" fill="#333"/>
<!-- save -->
<rect x="100.5" y="18.5" width="17" height="18" rx="1" fill="#6a6a6a" stroke="#333"/>
<rect x="103" y="20" width="12" height="6" fill="#f0f0f0"/>
<rect x="104" y="22" width="10" height="1" fill="#555"/>
<rect x="104" y="29" width="10" height="7" fill="#e8e8e8"/>
<rect x="105" y="30" width="3" height="6" fill="#444"/>
<!-- back fwd up -->
<path d="M138 27 l8 -8 v5 h9 v6 h-9 v5 Z" fill="#e4e2de" stroke="#c8c6c2"/>
<path d="M189 27 l-8 -8 v5 h-9 v6 h9 v5 Z" fill="#e4e2de" stroke="#c8c6c2"/>
<path d="M213 18 l-7.5 8 h4.5 v9 h6 v-9 h4.5 Z" fill="#e4e2de" stroke="#c8c6c2"/>
</g>
<!-- library browser -->
<rect x="240.5" y="12.5" width="9" height="9" fill="#e8e8e8" stroke="#777"/>
<path d="M242 20 l2 -6 m2 6 l2 -6" stroke="#888" stroke-width="0.8"/>
<rect x="252.5" y="12.5" width="9" height="9" fill="#2a8ad8" stroke="#1a5a98"/>
<path d="M253 17 q2 -4 4 0 t4 0" stroke="#fff" fill="none" stroke-width="0.8"/>
<rect x="240.5" y="24.5" width="9" height="9" fill="#e05020" stroke="#a03010"/>
<rect x="243.5" y="27.5" width="3" height="3" fill="none" stroke="#fff" stroke-width="0.8"/>
<rect x="252.5" y="24.5" width="9" height="9" fill="#f0f0f0" stroke="#777"/>
<path d="M253 32 h3 v-5 h5" stroke="#666" fill="none" stroke-width="0.8"/>
<!-- gear -->
<circle cx="284" cy="23" r="9" fill="#cfcfcf" stroke="#444" stroke-width="1.6" stroke-dasharray="2.4 1.9"/>
<circle cx="284" cy="23" r="8" fill="#d4d4d4"/>
<circle cx="284" cy="23" r="5.5" fill="#777" stroke="#333" stroke-width="1"/>
<circle cx="284" cy="23" r="3.8" fill="#aaa" stroke="#555" stroke-width="0.8"/>
<circle cx="284" cy="23" r="2" fill="#fff"/>
<path d="M301 21 h9 l-4.5 5 Z" fill="#333"/>
<!-- model explorer -->
<rect x="319.5" y="14.5" width="19" height="17" fill="#f8f8f8" stroke="#333"/>
<rect x="320" y="15" width="18" height="3" fill="#8ab8e0"/>
<path d="M322 20.5 h3 m2 0 h3 m2 0 h3 M322 28.5 h3 m2 0 h3 m2 0 h3" stroke="#111" stroke-width="1"/>
<rect x="321" y="23" width="16" height="3" rx="1" fill="#1e4e90"/>
<path d="M322.5 24.5 h3 m2 0 h3 m2 0 h3" stroke="#fff" stroke-width="1"/>
<path d="M346 21 h9 l-4.5 5 Z" fill="#333"/>
<!-- update diagram -->
<rect x="367.5" y="19.5" width="10" height="7" fill="#98d060" stroke="#3a8a30" stroke-width="0.9"/>
<circle cx="383.5" cy="22.8" r="6.5" fill="url(#tgb)" stroke="#2a5a90" stroke-width="1"/>
<path d="M378.5 22 a5 4 0 0 1 9 -2 M388.5 23.5 a5 4 0 0 1 -9 2" stroke="#fff" stroke-width="1.8" fill="none"/>
<path d="M386 16 l3.5 3.5 l-4 1.5 Z M381 29.5 l-3.5 -3.5 l4 -1.5 Z" fill="#2a5a90"/>
<!-- step back -->
<path d="M413.5 15.5 L404.5 22.8 L413.5 29.9 Z" fill="url(#tgb)" stroke="#2a5a90" stroke-width="0.9"/>
<rect x="416.5" y="14.5" width="3" height="11" fill="url(#tgb)" stroke="#2a5a90" stroke-width="0.9"/>
<circle cx="418" cy="28.8" r="3.8" fill="#555" stroke="#333" stroke-width="1.6" stroke-dasharray="1.5 1"/>
<circle cx="418" cy="28.8" r="1.1" fill="#eee"/>
<!-- run -->
<circle cx="445" cy="22.8" r="10.5" fill="url(#tgp)" stroke="#3a8a20"/>
<path d="M442 17.5 L450.5 22.8 L442 28 Z" fill="#1a1a1a"/>
<!-- step fwd -->
<rect x="470.5" y="14.5" width="3" height="16" fill="url(#tgb)" stroke="#2a5a90" stroke-width="0.9"/>
<path d="M476.5 14.5 L485.5 22.8 L476.5 30.5 Z" fill="url(#tgb)" stroke="#2a5a90" stroke-width="0.9"/>
<!-- stop -->
<circle cx="511" cy="22.8" r="10.5" fill="#f1efed" stroke="#d4d2ce"/>
<rect x="507" y="19" width="8" height="8" fill="#aaa6a2"/>
<!-- scope -->
<defs><linearGradient id="tgs" x1="0" y1="0" x2="0" y2="1"><stop offset="0" stop-color="#ffffff"/><stop offset="1" stop-color="#d8d8d8"/></linearGradient></defs>
<rect x="540.5" y="12.5" width="21" height="21" fill="url(#tgs)" stroke="#222"/>
<path d="M541 27 C545 14 548 14 551 20 S557 26 561 17" stroke="#d03030" fill="none" stroke-width="1.2"/>
<path d="M541 22 C544 14 547 14 550 18 S556 26 561 24" stroke="#3058c0" fill="none" stroke-width="1.2"/>
<path d="M568 21 h9 l-4.5 5 Z" fill="#333"/>
<!-- check -->
<circle cx="922" cy="23" r="8.5" fill="url(#tgc)" stroke="#4a7a30" stroke-width="1.3"/>
<path d="M917.5 23.5 L921 27 L927 18.5" stroke="#58a828" stroke-width="2.2" fill="none"/>
<path d="M938 21 h9 l-4.5 5 Z" fill="#333"/>
<!-- grid -->
<rect x="962.5" y="19.5" width="19" height="13" rx="2" fill="#fff" stroke="#2a5aa0" stroke-width="1.5"/>
<path d="M965 23.5 h15 M965 27 h15 M965 30 h15" stroke="#2a5aa0" stroke-width="1.5" stroke-dasharray="1.5 1.5"/>
<path d="M966 11 v6 M972 11 v6 M978 11 v6" stroke="#2a5aa0" stroke-width="1"/>
<path d="M964 16 l2 2 l2 -2 M970 16 l2 2 l2 -2 M976 16 l2 2 l2 -2" fill="#2a5aa0" stroke="#2a5aa0"/>
<path d="M990 21 h9 l-4.5 5 Z" fill="#333"/>
</svg>
<div style="position:absolute;left:589px;top:56px;width:92px;height:21px;background:#fff;border:1px solid #bdb9b4;border-radius:2px;"></div>
<div style="position:absolute;left:593px;top:60px;font:13.4px 'Liberation Sans', sans-serif;color:#1a1a1a">10.0</div>
<div style="position:absolute;left:702px;top:56px;width:187px;height:21px;background:linear-gradient(#fbfaf9,#ebe8e4);border:1px solid #bdb9b4;border-radius:2px;"></div>
<div style="position:absolute;left:707px;top:60px;font:13.4px 'Liberation Sans', sans-serif;color:#1a1a1a">Normal</div>
<svg style="position:absolute;left:874px;top:63px" width="10" height="8"><path d="M1 2 h8 l-4 4.5 Z" fill="#444"/></svg>
<div style="position:absolute;left:0;top:91px;width:1920px;height:25px;background:#edeae6"></div>
<div style="position:absolute;left:2px;top:94px;width:99px;height:21px;background:#fff;border-top:1px solid #e4e0dc;border-right:1px solid #e4e0dc"></div>
<div style="position:absolute;left:13px;top:96px;font:13.4px 'Liberation Sans', sans-serif;color:#1a1a1a">h1susetmxpi</div>
<div style="position:absolute;left:0;top:116px;width:34px;height:940px;background:#edeae6"></div>
<div style="position:absolute;left:34px;top:115px;width:1884px;height:29px;background:#edeae6"></div>
<div style="position:absolute;left:35px;top:116px;width:1882px;height:26px;background:#fff;border-bottom:2px solid #d0ccc8;border-left:1px solid #ddd"></div>
<svg style="position:absolute;left:36px;top:121px" width="18" height="18">
<rect x="1.5" y="1.5" width="15" height="15" fill="#f4f4f4" stroke="#777"/>
<path d="M3.5 3 L9.5 6.5 L3.5 10 Z" fill="#2a8ad8"/>
<rect x="9" y="9" width="5" height="5" fill="#e04a10"/></svg>
<div style="position:absolute;left:55px;top:121px;font:13.4px 'Liberation Sans', sans-serif;color:#1a1a1a">h1susetmxpi</div>
<svg style="position:absolute;left:1900px;top:124px" width="14" height="10"><path d="M1 1.5 h11 l-5.5 5.5 Z" fill="#111"/></svg>
<svg style="position:absolute;left:0;top:116px" width="34" height="940">
<circle cx="17.5" cy="14" r="5.5" fill="#eee" stroke="#555"/>
<path d="M14.5 14 h6 M17 11.5 l-2.5 2.5 l2.5 2.5" stroke="#333" stroke-width="1.2" fill="none"/>
<rect x="8" y="32" width="19" height="1" fill="#b8b4b0"/>
<rect x="10.5" y="44.5" width="15" height="15" fill="none" stroke="#888" stroke-dasharray="1.5 1.5"/>
<circle cx="17" cy="50" r="4.5" fill="#fff" stroke="#222" stroke-width="1.2"/>
<path d="M15 50 h4 M17 48 v4" stroke="#222"/>
<path d="M20.5 53.5 l4.5 4.5" stroke="#222" stroke-width="1.6"/>
<rect x="10.5" y="72.5" width="15" height="13" fill="#fafafa" stroke="#333"/>
<path d="M13 75 l3 3 M13 75 h2 M13 75 v2 M23 75 l-3 3 M23 75 h-2 M23 75 v2 M13 83 l3 -3 M13 83 h2 M13 83 v-2 M23 83 l-3 -3 M23 83 h-2 M23 83 v-2" stroke="#333" stroke-width="0.9"/>
<path d="M11 105 h12 M11 110 h12 M21 102 l4 3 l-4 3 M21 107 l4 3 l-4 3" stroke="#333" fill="none" stroke-width="0.9"/>
<rect x="11.5" y="130.5" width="13" height="11" fill="#fafafa" stroke="#333"/>
<text x="13" y="139.5" font-family="Liberation Sans" font-weight="bold" font-size="8" fill="#222">A</text>
<path d="M19 134 h4 M19 136 h4 M19 138 h4" stroke="#333" stroke-width="0.7"/>
<rect x="10.5" y="158.5" width="15" height="13" fill="#ddd" stroke="#555"/>
<path d="M12 168 q3 -6 5.5 0 t5.5 -2 v5 h-11 Z" fill="#888"/>
<rect x="11.5" y="186.5" width="13" height="13" fill="#e8e8f8" stroke="#888"/>
</svg>
<svg style="position:absolute;left:0;top:970px" width="34" height="85">
<rect x="10.5" y="9.5" width="15" height="11" rx="1.5" fill="#e8e8e8" stroke="#555"/>
<rect x="13" y="8" width="4" height="2" fill="#555"/>
<circle cx="17.5" cy="15" r="3.5" fill="#666" stroke="#333"/>
<rect x="10.5" y="37.5" width="15" height="13" fill="#f0f0f0" stroke="#555"/>
<rect x="12" y="35" width="5" height="10" fill="#333"/>
<rect x="19" y="39" width="5" height="4" fill="#999"/>
<rect x="12" y="45" width="4" height="4" fill="#999"/>
<rect x="19" y="45" width="5" height="4" fill="#999"/>
<path d="M13 66 l4 4 l-4 4 M18 66 l4 4 l-4 4" stroke="#444" stroke-width="1.3" fill="none"/>
</svg>
<div style="position:absolute;left:0;top:1055px;width:1920px;height:25px;background:#edeae6"></div>
<div style="position:absolute;left:34px;top:1055px;width:1884px;height:2px;background:#bcb8b4"></div>
<div style="position:absolute;left:6px;top:1063px;font:13px 'Liberation Sans', sans-serif;color:#1a1a1a">Ready</div>
<div style="position:absolute;left:971px;top:1063px;font:13px 'Liberation Sans', sans-serif;color:#1a1a1a">100%</div>
<div style="position:absolute;left:1876px;top:1063px;font:13px 'Liberation Sans', sans-serif;color:#1a1a8a">ode45</div>
<div style="position:absolute;left:1883px;top:1045px;width:3px;height:9px;background:#f0efed"></div><div style="position:absolute;left:1887px;top:1045px;width:3px;height:9px;background:#f0efed"></div><div style="position:absolute;left:1891px;top:1045px;width:10px;height:9px;background:#f0efed"></div>
<div style="position:absolute;left:35px;top:143px;width:1883px;height:2px;background:#cfcbc7"></div>
<div style="position:absolute;left:34px;top:144px;width:1px;height:912px;background:#b8b4b0"></div>
<div style="position:absolute;left:1903px;top:145px;width:15px;height:910px;background:#e6e2df;border-left:1px solid #bcb8b4;border-right:1px solid #bcb8b4;box-sizing:border-box"></div>
<div style="position:absolute;left:1904px;top:146px;width:13px;height:14px;background:#f4f2f0;border-bottom:1px solid #cfcbc7"></div>
<svg style="position:absolute;left:1904px;top:148px" width="13" height="10"><path d="M2 7 h9 l-4.5 -4.5 Z" fill="#555"/></svg>
<div style="position:absolute;left:1904px;top:431px;width:13px;height:551px;background:linear-gradient(90deg,#fdfdfc,#efedea);border-top:1px solid #bcb8b4;border-bottom:1px solid #bcb8b4"></div>
<div style="position:absolute;left:1904px;top:1042px;width:13px;height:13px;background:#f8f7f5;border-top:1px solid #cfcbc7"></div>
<svg style="position:absolute;left:1904px;top:1045px" width="13" height="10"><path d="M2 2.5 h9 l-4.5 4.5 Z" fill="#555"/></svg>
</body></html>
